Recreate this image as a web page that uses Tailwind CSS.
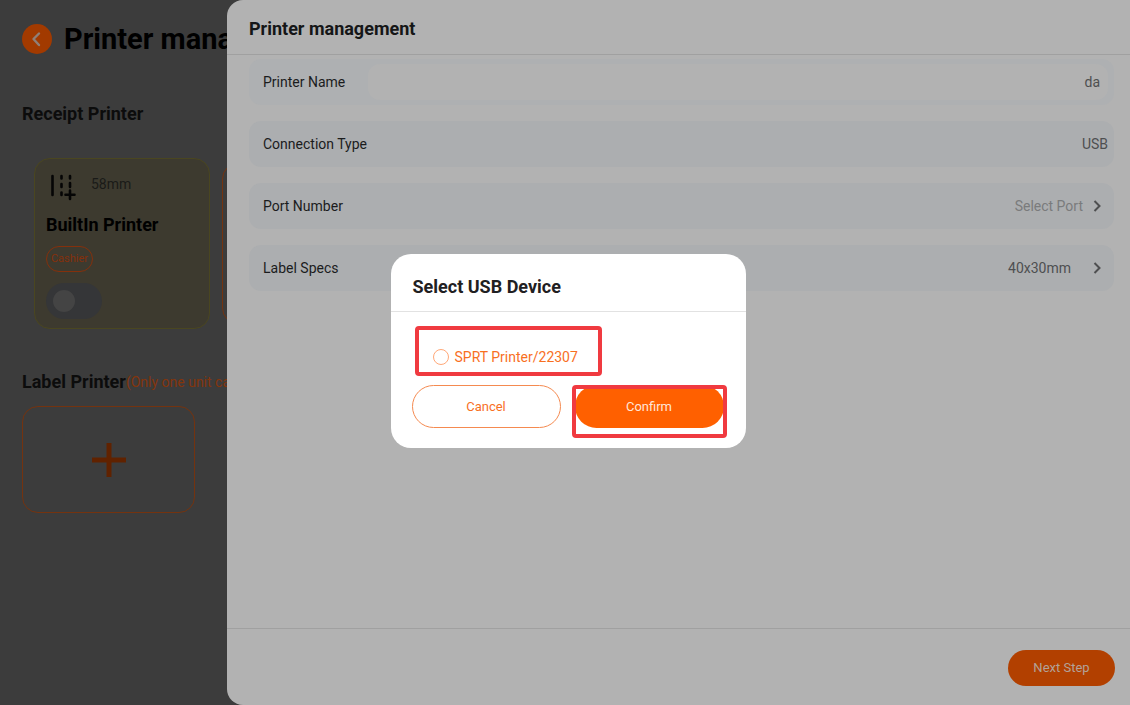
<!DOCTYPE html>
<html lang="en">
<head>
<meta charset="utf-8">
<meta name="viewport" content="width=device-width, initial-scale=1">
<title>Printer management</title>
<script src="https://cdn.jsdelivr.net/npm/@tailwindcss/browser@4"></script>
</head>
<body class="relative h-screen overflow-hidden bg-[#3c3c3c] font-['Roboto',sans-serif] text-black">

<!-- Page behind the drawer -->
<main class="h-full w-60 overflow-hidden whitespace-nowrap pl-[22px] pt-[21px]">
  <header class="flex items-center gap-3">
    <button type="button" aria-label="Back" class="flex size-[30px] shrink-0 items-center justify-center rounded-full bg-[#a23a00]">
      <svg class="size-[30px]" viewBox="0 0 30 30" fill="none" stroke="#8f8078" stroke-width="2.4" stroke-linecap="round" stroke-linejoin="round"><path d="M17 9.500 11.500 15 17 21"/></svg>
    </button>
    <h1 class="min-w-0 overflow-hidden text-[29px] leading-9 font-bold">Printer management</h1>
  </header>

  <section class="mt-[45px]">
    <h2 class="text-[18px] leading-6 font-bold text-[#0c0c0c]">Receipt Printer</h2>
    <div class="mt-8 ml-3 flex items-start gap-3">
      <article class="h-[171px] w-[176px] shrink-0 rounded-2xl border border-[#4a4620] bg-[#3d3a2f] px-[11px] pt-[11px]">
        <div class="flex items-start gap-[13px]">
          <svg class="h-8 w-8" viewBox="0 0 32 32" fill="none" stroke="#050505" stroke-width="2.600" stroke-linecap="round"><path d="M6.500 6V25M15.500 6V8.500M15.500 14V17M15.500 22.500V25M24 6V8.500M24 13V17"/><path d="M24 20.500V29M19.500 24.700H28.500"/></svg>
          <span class="pt-1 text-[14px] leading-5 text-[#1a1a18]">58mm</span>
        </div>
        <h3 class="mt-[11px] text-[18px] leading-6 font-bold">BuiltIn Printer</h3>
        <span class="mt-[9px] flex h-[26px] w-[47px] items-center justify-center rounded-full border border-[#84300c] text-[11px] text-[#84300c]">Cashier</span>
        <label class="relative mt-[11px] block h-9 w-14 rounded-full bg-[#353638]">
          <input type="checkbox" role="switch" aria-label="Enable BuiltIn Printer" class="absolute inset-0 size-full appearance-none rounded-full">
          <span class="absolute top-[7px] left-[7px] size-[22px] rounded-full bg-[#444444]"></span>
        </label>
      </article>
      <article class="mt-[5px] h-[161px] w-[176px] shrink-0 rounded-2xl border border-[#74330f]"></article>
    </div>
  </section>

  <section class="mt-[41px]">
    <h2 class="flex items-center text-[18px] leading-6 font-bold text-[#0c0c0c]">Label Printer<span class="min-w-0 overflow-hidden text-[14px] font-normal text-[#84350c]">(Only one unit can be added)</span></h2>
    <button type="button" aria-label="Add label printer" class="mt-3 flex h-[107px] w-[173px] items-center justify-center rounded-2xl border border-[#74330f]">
      <svg class="size-[34px]" viewBox="0 0 34 34" fill="none" stroke="#602200" stroke-width="5"><path d="M17 0V34M0 17H34"/></svg>
    </button>
  </section>
</main>

<!-- Drawer -->
<aside class="absolute inset-y-0 right-0 left-[227px] flex flex-col rounded-l-2xl bg-[#b2b2b2]">
  <header class="border-b border-[#a0a0a0] pt-[17px] pb-[13px] pl-[22px]">
    <h2 class="text-[18px] leading-6 font-bold text-[#151617]">Printer management</h2>
  </header>
  <form id="printer" class="flex flex-1 flex-col gap-4 pt-1 pr-4 pl-[22px] text-[14px] text-[#4e4f50]">
    <div class="flex h-[46px] items-center rounded-xl bg-[#aeb0b2] pr-[6px] pl-[14px]">
      <label for="name" class="w-[105px] text-[#1b1c1d]">Printer Name</label>
      <input id="name" type="text" value="da" class="h-9 min-w-0 flex-1 rounded-xl bg-[#b2b2b2] px-2 text-right">
    </div>
    <div class="flex h-[46px] items-center justify-between rounded-xl bg-[#acaeb0] pr-[6px] pl-[14px]">
      <span class="text-[#1b1c1d]">Connection Type</span>
      <span>USB</span>
    </div>
    <button type="button" class="flex h-[46px] items-center rounded-xl bg-[#acaeb0] pr-[7px] pl-[14px]">
      <span class="text-[#1b1c1d]">Port Number</span>
      <span class="ml-auto text-[#7a7b7c]">Select Port</span>
      <svg class="ml-1 size-5" viewBox="0 0 20 20" fill="none" stroke="#4e4f50" stroke-width="2"><path d="M7.500 5 12.500 10 7.500 15"/></svg>
    </button>
    <button type="button" class="flex h-[46px] items-center rounded-xl bg-[#acaeb0] pr-[7px] pl-[14px]">
      <span class="text-[#1b1c1d]">Label Specs</span>
      <span class="ml-auto">40x30mm</span>
      <svg class="ml-4 size-5" viewBox="0 0 20 20" fill="none" stroke="#4e4f50" stroke-width="2"><path d="M7.500 5 12.500 10 7.500 15"/></svg>
    </button>
  </form>
  <footer class="flex justify-end border-t border-[#a0a0a0] pt-[21px] pr-[15px] pb-[19px]">
    <button type="submit" form="printer" class="h-9 w-[107px] rounded-full bg-[#b24000] text-[13px] text-[#b2a298]">Next Step</button>
  </footer>
</aside>

<!-- Dialog -->
<div class="absolute inset-0 flex items-center justify-center pb-[3px] pl-[6px]">
  <form role="dialog" aria-labelledby="dialog-title" class="w-[355px] rounded-[20px] bg-white pb-5">
    <h2 id="dialog-title" class="border-b border-[#e2e2e2] pt-[21px] pb-3 pl-[22px] text-[18px] leading-6 font-bold text-[#1f2022]">Select USB Device</h2>
    <div class="mt-[14px] ml-6 flex h-[50px] w-[187px] items-end rounded-[4px] border-4 border-[#f03a40] pb-[5px] pl-[14px]">
      <label class="flex items-center gap-[6px] text-[14px] leading-5 whitespace-nowrap text-[#f8701f]">
        <input type="radio" name="device" class="size-4 appearance-none rounded-full border border-[#ffa878]">SPRT Printer/22307
      </label>
    </div>
    <div class="mt-[9px] flex gap-[14px] px-[21px] text-[13px]">
      <button type="button" class="h-[43px] w-[149px] rounded-full border border-[#f58a50] text-[#f8701f]">Cancel</button>
      <div class="relative">
        <button type="submit" class="h-[43px] w-[149px] rounded-full bg-[#ff6000] text-[#ffe6d8]">Confirm</button>
        <span class="pointer-events-none absolute top-0 -right-[3px] -bottom-[10px] -left-[3px] rounded-[4px] border-4 border-[#f03a40]"></span>
      </div>
    </div>
  </form>
</div>
</body>
</html>
